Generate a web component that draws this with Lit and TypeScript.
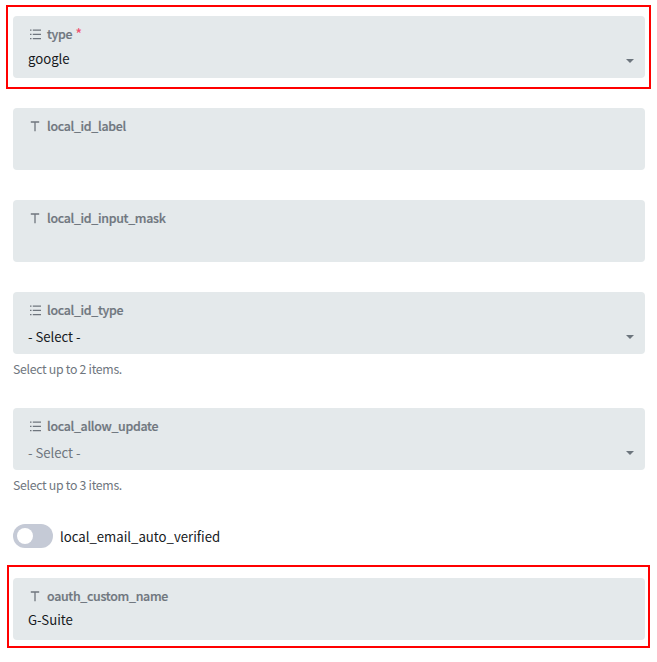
import { LitElement, html, svg, css, nothing } from "lit";
import { customElement, property } from "lit/decorators.js";

const listIcon = svg`<path d="M2 3h1.5M2 7.4h1.5M2 11.6h1.5M4.8 3h8.2M4.8 7.4h8.2M4.8 11.6h8.2" stroke-width="1.25"/>`;
const textIcon = svg`<path d="M2.8 3h8.4M7 3v9.2" stroke-width="1.3"/>`;

@customElement("form-field")
class FormField extends LitElement {
  @property() label = "";
  @property() value = "";
  @property() help = "";
  @property({ type: Boolean }) select = false;
  @property({ type: Boolean }) required = false;
  @property({ type: Boolean }) placeholder = false;

  static styles = css`
    :host { display: block; }
    .box {
      box-sizing: border-box;
      height: 62px;
      padding: 9px 11px 0 15px;
      border-radius: 4px;
      background: #e4e9eb;
    }
    .head { display: flex; align-items: center; height: 18px; color: #6f767e; }
    .icon { width: 14px; height: 14px; margin-right: 5px; fill: none; stroke: currentColor; flex: none; }
    .label { font-size: 12.4px; font-weight: 500; letter-spacing: -0.3px; -webkit-text-stroke: 0.2px currentColor; line-height: 18px; white-space: nowrap; }
    .star { color: #f0506e; font-size: 15px; line-height: 18px; margin: 0 0 0 3px; }
    .row { display: flex; align-items: center; height: 20px; margin-top: 5px; }
    :host([select]) .row { margin-top: 6px; }
    :host(.low) .row { margin-top: 8px; }
    .value { flex: 1; font-size: 13.2px; letter-spacing: -0.03px; line-height: 20px; color: #16191d; white-space: nowrap; }
    .muted { color: #6f767e; }
    .arrow { width: 8px; height: 4px; fill: #6c757d; margin-top: 3px; }
    :host(.low) .arrow { margin-top: 0; }
    .help { height: 24px; margin-top: 3px; margin-bottom: 1px; font-size: 12.3px; letter-spacing: -0.3px; line-height: 24px; color: #6f767e; }
  `;

  render() {
    return html`
      <div class="box">
        <div class="head">
          <svg class="icon" viewBox="0 0 14 14">${this.select ? listIcon : textIcon}</svg>
          <span class="label">${this.label}</span>
          ${this.required ? html`<span class="star">*</span>` : nothing}
        </div>
        <div class="row">
          <span class="value ${this.placeholder ? "muted" : ""}">${this.value}</span>
          ${this.select ? html`<svg class="arrow" viewBox="0 0 8 4"><path d="M0 0h8L4 4z"/></svg>` : nothing}
        </div>
      </div>
      ${this.help ? html`<div class="help">${this.help}</div>` : nothing}
    `;
  }
}

@customElement("app-root")
class AppRoot extends LitElement {
  static styles = css`
    :host {
      display: block;
      box-sizing: border-box;
      height: 662px;
      padding: 16px 12px 0 13px;
      background: #fff;
      font-family: "Noto Sans CJK SC", "Noto Sans", sans-serif;
    }
    .form { display: flex; flex-direction: column; gap: 30px; }
    form-field { position: relative; }
    .marked::after { content: ""; position: absolute; border: 2px solid #f00; pointer-events: none; }
    .first::after { inset: -11px -6px -11px -7px; }
    .last::after { inset: -13px -5px -8px -6px; }
    .helped { margin-bottom: -4px; }
    .toggle { display: flex; align-items: center; height: 24px; }
    .track { box-sizing: border-box; width: 40px; height: 24px; padding: 4px; border-radius: 12px; background: #c5cad6; }
    .knob { width: 16px; height: 16px; border-radius: 50%; background: #fff; }
    .name { margin-left: 7px; font-size: 13.2px; letter-spacing: -0.01px; line-height: 26px; height: 24px; color: #16191d; }
  `;

  render() {
    return html`
      <div class="form">
        <form-field class="marked first" label="type" value="google" select required></form-field>
        <form-field label="local_id_label"></form-field>
        <form-field label="local_id_input_mask"></form-field>
        <form-field class="low helped" label="local_id_type" value="- Select -" help="Select up to 2 items." select></form-field>
        <form-field class="low helped" label="local_allow_update" value="- Select -" help="Select up to 3 items." select placeholder></form-field>
        <div class="toggle">
          <div class="track"><div class="knob"></div></div>
          <span class="name">local_email_auto_verified</span>
        </div>
        <form-field class="marked last" label="oauth_custom_name" value="G-Suite"></form-field>
      </div>
    `;
  }
}
